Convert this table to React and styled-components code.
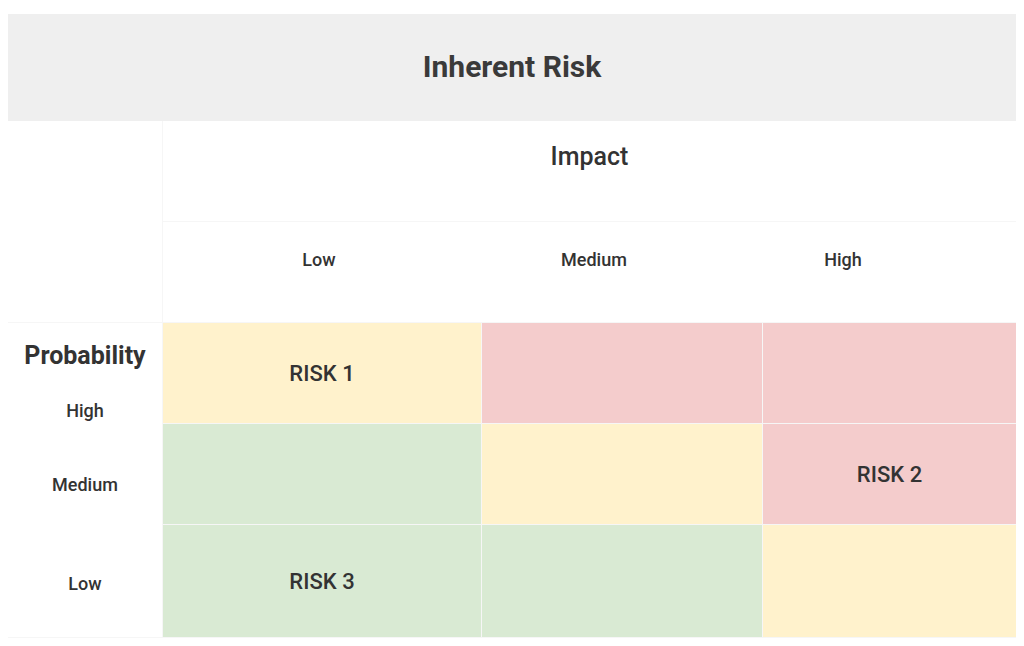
import styled, { createGlobalStyle } from "styled-components";

const GlobalStyle = createGlobalStyle`
  html, body {
    margin: 0;
    padding: 0;
    background: #ffffff;
  }
  body {
    font-family: Roboto, "Noto Sans", "Liberation Sans", sans-serif;
    color: #333333;
  }
`;

const Page = styled.div`
  width: 1024px;
  height: 646px;
  padding: 14px 8px 0 8px;
  box-sizing: border-box;
`;

const TitleBar = styled.div`
  height: 107px;
  background: #efefef;
  display: flex;
  align-items: center;
  justify-content: center;
  padding-bottom: 3px;
  box-sizing: border-box;
  font-size: 30px;
  font-weight: 700;
  color: #3a3a3a;
`;

const Matrix = styled.div`
  display: grid;
  grid-template-columns: 154px 318px 280px 253px;
  grid-template-rows: 100px 100px 100px 100px 112px;
  background: #f6f6f6;
  gap: 1px;
  padding: 0 0 1px 0;
`;

const Blank = styled.div`
  background: #ffffff;
  grid-row: ${(p) => p.$row};
  grid-column: ${(p) => p.$col};
`;

const ImpactCell = styled.div`
  grid-row: 1;
  grid-column: 2 / 5;
  background: #ffffff;
  display: flex;
  justify-content: center;
  padding-top: 21px;
  font-size: 25px;
  font-weight: 500;
  color: #333333;
`;

const LabelRow = styled.div`
  grid-row: 2;
  grid-column: 2 / 5;
  background: #ffffff;
  display: grid;
  grid-template-columns: 312px 238px 260px 1fr;
  align-items: start;
  padding-top: 27px;
`;

const AxisLabel = styled.div`
  text-align: center;
  font-size: 18px;
  font-weight: 500;
  color: #333333;
`;

const ProbabilityColumn = styled.div`
  grid-row: 3 / 6;
  grid-column: 1;
  background: #ffffff;
  display: grid;
  grid-template-rows: 64px 46px 102px 96px;
  align-items: center;
  justify-items: center;
`;

const ProbabilityTitle = styled.div`
  font-size: 25px;
  font-weight: 700;
  color: #333333;
`;

const levels = {
  low: "#d9ead3",
  medium: "#fff2cc",
  high: "#f4cccc",
};

const RiskCell = styled.div`
  background: ${(p) => levels[p.$level]};
  display: flex;
  align-items: center;
  justify-content: center;
  font-size: 22px;
  font-weight: 500;
  color: #333333;
`;

const cells = [
  ["medium", "RISK 1"],
  ["high", ""],
  ["high", ""],
  ["low", ""],
  ["medium", ""],
  ["high", "RISK 2"],
  ["low", "RISK 3"],
  ["low", ""],
  ["medium", ""],
];

const App = () => {
  return (
    <>
      <GlobalStyle />
      <Page>
        <TitleBar>Inherent Risk</TitleBar>
        <Matrix>
          <Blank $row="1 / 3" $col="1" />
          <ImpactCell>Impact</ImpactCell>
          <LabelRow>
            <AxisLabel>Low</AxisLabel>
            <AxisLabel>Medium</AxisLabel>
            <AxisLabel>High</AxisLabel>
          </LabelRow>
          <ProbabilityColumn>
            <ProbabilityTitle>Probability</ProbabilityTitle>
            <AxisLabel>High</AxisLabel>
            <AxisLabel>Medium</AxisLabel>
            <AxisLabel>Low</AxisLabel>
          </ProbabilityColumn>
          {cells.map(([level, label], i) => (
            <RiskCell key={i} $level={level}>
              {label}
            </RiskCell>
          ))}
        </Matrix>
      </Page>
    </>
  );
};

export default App;
